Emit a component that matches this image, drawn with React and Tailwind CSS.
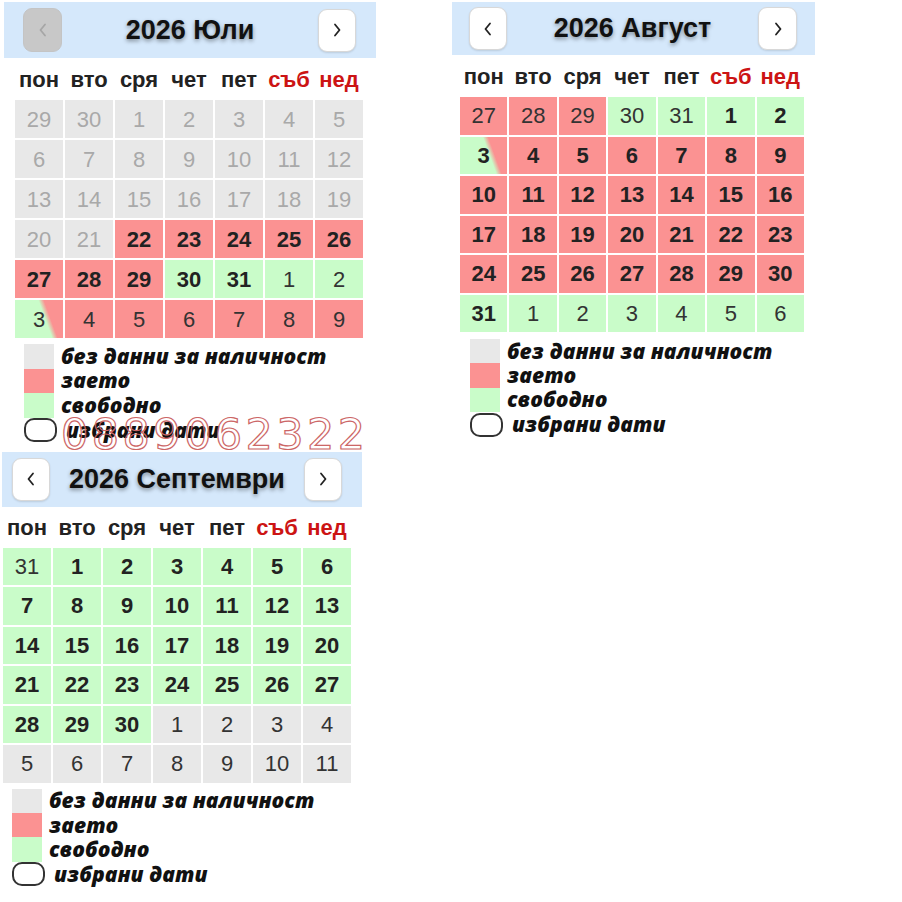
import React from "react";

const july = [
  "29n 30n 1n 2n 3n 4n 5n",
  "6n 7n 8n 9n 10n 11n 12n",
  "13n 14n 15n 16n 17n 18n 19n",
  "20n 21n 22R 23R 24R 25R 26R",
  "27R 28R 29R 30G 31G 1g 2g",
  "3x 4r 5r 6r 7r 8r 9r",
];

const august = [
  "27r 28r 29r 30g 31g 1G 2G",
  "3X 4R 5R 6R 7R 8R 9R",
  "10R 11R 12R 13R 14R 15R 16R",
  "17R 18R 19R 20R 21R 22R 23R",
  "24R 25R 26R 27R 28R 29R 30R",
  "31G 1g 2g 3g 4g 5g 6g",
];

const september = [
  "31g 1G 2G 3G 4G 5G 6G",
  "7G 8G 9G 10G 11G 12G 13G",
  "14G 15G 16G 17G 18G 19G 20G",
  "21G 22G 23G 24G 25G 26G 27G",
  "28G 29G 30G 1N 2N 3N 4N",
  "5N 6N 7N 8N 9N 10N 11N",
];

const cellStyle = {
  n: "bg-[#e8e8e8] text-[#a9a9a9]",
  N: "bg-[#e8e8e8] text-[#333]",
  R: "bg-[#fb9292] text-[#222] font-bold",
  r: "bg-[#fb9292] text-[#333]",
  G: "bg-[#c9fcc9] text-[#222] font-bold",
  g: "bg-[#c9fcc9] text-[#333]",
  X: "bg-[linear-gradient(70deg,#c9fcc9_60%,#fb9292_69%)] text-[#222] font-bold",
  x: "bg-[linear-gradient(70deg,#c9fcc9_60%,#fb9292_69%)] text-[#333]",
};

const days = ["пон", "вто", "сря", "чет", "пет", "съб", "нед"];

const Chevron = ({ dir, color }) => (
  <svg width="10" height="14" viewBox="0 0 10 14" fill="none">
    <polyline
      points={dir === "left" ? "7,1.5 2.5,7 7,12.5" : "3,1.5 7.5,7 3,12.5"}
      stroke={color}
      strokeWidth="1.8"
      strokeLinecap="round"
      strokeLinejoin="round"
    />
  </svg>
);

const NavButton = ({ dir, disabled, className }) => (
  <button
    className={
      "flex items-center justify-center rounded-[9px] border shrink-0 " +
      (disabled
        ? "bg-[#c8c8c8] border-[#c4c4c4]"
        : "bg-white border-[#d8d8d8] shadow-[0_1px_2px_rgba(0,0,0,0.12)]") +
      " " +
      className
    }
  >
    <Chevron dir={dir} color={disabled ? "#a6a6a6" : "#222"} />
  </button>
);

const Legend = ({ className, rowH }) => (
  <div className={"flex flex-col font-['Open_Sans',sans-serif] italic font-extrabold text-[21px] leading-none text-[#111] " + className}>
    <div className={"flex items-center " + rowH}>
      <div className="w-[30px] h-full bg-[#e8e8e8]" />
      <span className="ml-[7px]">без данни за наличност</span>
    </div>
    <div className={"flex items-center " + rowH}>
      <div className="w-[30px] h-full bg-[#fb9292]" />
      <span className="ml-[7px]">заето</span>
    </div>
    <div className={"flex items-center " + rowH}>
      <div className="w-[30px] h-full bg-[#c9fcc9]" />
      <span className="ml-[7px]">свободно</span>
    </div>
    <div className="flex items-center h-[25px]">
      <div className="w-[33px] h-[24px] rounded-[10px] border-2 border-[#333]" />
      <span className="ml-[9px]">избрани дати</span>
    </div>
  </div>
);

const Calendar = ({ title, weeks, cfg }) => (
  <div className={"flex flex-col " + cfg.wrap}>
    {/* header */}
    <div className={"flex items-center bg-[#d5e8fb] " + cfg.header}>
      <NavButton dir="left" disabled={cfg.prevDisabled} className={cfg.prev} />
      <div className="flex-1 text-center text-[27px] font-bold text-[#111] [text-shadow:0_2px_4px_rgba(0,0,0,0.4)]">
        {title}
      </div>
      <NavButton dir="right" className={cfg.next} />
    </div>

    {/* weekdays */}
    <div className={"grid grid-cols-7 gap-x-[2px] items-center text-[22px] font-bold " + cfg.week}>
      {days.map((d, i) => (
        <div key={d} className={"text-center " + (i > 4 ? "text-[#cc1414]" : "text-[#222]")}>
          {d}
        </div>
      ))}
    </div>

    {/* days */}
    <div className={"grid grid-cols-7 gap-[2px] text-[22px] " + cfg.grid}>
      {weeks.map((w) =>
        w.split(" ").map((t, i) => {
          const s = t.slice(-1);
          return (
            <div key={w + i} className={"flex items-center justify-center " + cfg.cell + " " + cellStyle[s]}>
              {t.slice(0, -1)}
            </div>
          );
        })
      )}
    </div>

    <Legend className={cfg.legend} rowH={cfg.legendRow} />
  </div>
);

const julyCfg = {
  wrap: "pt-[2px]",
  header: "ml-[4px] w-[372px] h-[56px]",
  prevDisabled: true,
  prev: "ml-[19px] w-[39px] h-[44px]",
  next: "mr-[20px] w-[38px] h-[43px]",
  week: "ml-[15px] w-[348px] h-[42px]",
  grid: "ml-[15px] w-[348px]",
  cell: "h-[38px]",
  legend: "ml-[24px] mt-[6px]",
  legendRow: "h-[24.5px]",
};

const septCfg = {
  wrap: "mt-[9px]",
  header: "ml-[2px] w-[360px] h-[55px]",
  prev: "ml-[10px] w-[38px] h-[43px]",
  next: "mr-[20px] w-[38px] h-[43px]",
  week: "ml-[3px] w-[348px] h-[41px]",
  grid: "ml-[3px] w-[348px]",
  cell: "h-[37.5px]",
  legend: "ml-[12px] mt-[6px]",
  legendRow: "h-[24.4px]",
};

const augCfg = {
  wrap: "pt-[2px]",
  header: "w-[363px] h-[53px]",
  prev: "ml-[17px] w-[38px] h-[43px]",
  next: "mr-[18px] w-[39px] h-[43px]",
  week: "ml-[8px] w-[344px] h-[42px]",
  grid: "ml-[8px] w-[344px]",
  cell: "h-[37.5px]",
  legend: "ml-[18px] mt-[7px]",
  legendRow: "h-[24.4px]",
};

export default function App() {
  return (
    <div className="relative w-[902px] h-[902px] bg-white overflow-hidden flex font-['Liberation_Sans',Arial,sans-serif]">
      <div className="w-[452px] shrink-0 flex flex-col">
        <Calendar title="2026 Юли" weeks={july} cfg={julyCfg} />
        <Calendar title="2026 Септември" weeks={september} cfg={septCfg} />
      </div>
      <div className="w-[380px] shrink-0">
        <Calendar title="2026 Август" weeks={august} cfg={augCfg} />
      </div>
      <div className="absolute left-[61px] top-[413px] pointer-events-none font-['DejaVu_Sans',sans-serif] text-[43px] leading-none tracking-[3.4px] text-transparent [-webkit-text-stroke:1.2px_#cc6666]">
        0889062322
      </div>
    </div>
  );
}
